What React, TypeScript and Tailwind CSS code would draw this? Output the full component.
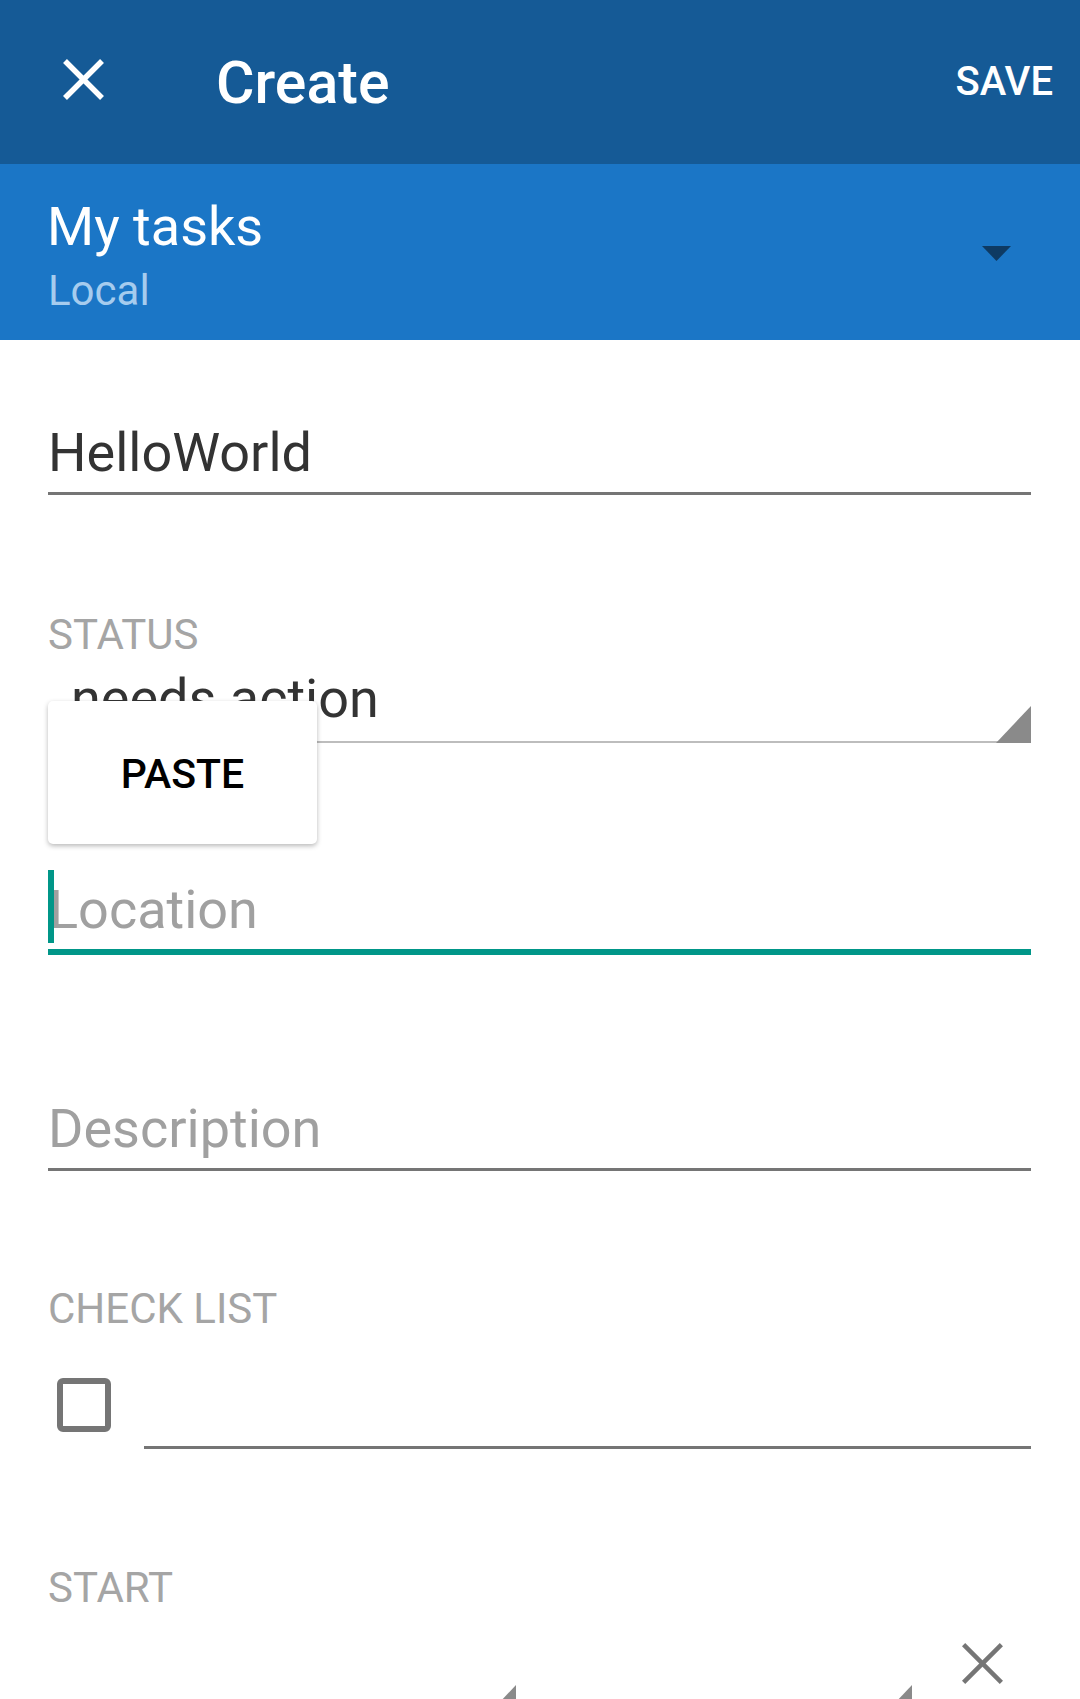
import React from 'react';

// Close glyph drawn as two crossed strokes
function CloseIcon({ size, color, stroke }: { size: number; color: string; stroke: number }) {
  const a = stroke * 0.36;
  const b = size - a;
  return (
    <svg width={size} height={size} viewBox={`0 0 ${size} ${size}`} className="block shrink-0">
      <line x1={a} y1={a} x2={b} y2={b} stroke={color} strokeWidth={stroke} />
      <line x1={b} y1={a} x2={a} y2={b} stroke={color} strokeWidth={stroke} />
    </svg>
  );
}

// Spinner corner triangle (right angle bottom-right)
function CornerTriangle({ className }: { className: string }) {
  return (
    <svg width="35" height="37" viewBox="0 0 35 37" className={className}>
      <polygon points="35,0 35,37 0,37" fill="#8a8a8a" />
    </svg>
  );
}

export default function App() {
  return (
    <div className="relative h-[1699px] w-[1080px] overflow-hidden bg-white font-['Roboto',sans-serif]">
      {/* Toolbar */}
      <header className="flex h-[164px] items-center bg-[#155a96] pr-[27px] text-white">
        <div className="mb-[6px] ml-[63px]">
          <CloseIcon size={41} color="#ffffff" stroke={5.5} />
        </div>
        <h1 className="ml-[112px] text-[59px] font-medium leading-none">Create</h1>
        <button className="ml-auto text-[40px] font-medium leading-none">SAVE</button>
      </header>

      {/* List selector */}
      <div className="flex h-[176px] justify-between bg-[#1b76c6] pl-[47px] pr-[69px]">
        <div className="flex flex-col pt-[36px]">
          <span className="text-[54px] leading-none text-white">My tasks</span>
          <span className="mt-[16px] pl-[1px] text-[42px] leading-none text-[#a6ccee]">Local</span>
        </div>
        <svg width="29" height="15" viewBox="0 0 29 15" className="mt-[82px]">
          <polygon points="0,0 29,0 14.5,15" fill="#0e3a63" />
        </svg>
      </div>

      {/* Form */}
      <div className="flex flex-col pl-[48px] pr-[49px]">
        {/* Title */}
        <div className="mt-[86px] text-[54px] leading-none text-[#333333]">HelloWorld</div>
        <div className="mt-[12px] h-[3px] bg-[#757575]" />

        {/* Status */}
        <div className="mt-[119px] text-[42px] leading-none text-[#a5a5a5]">STATUS</div>
        <div className="mt-[16px] pl-[23px] text-[54px] leading-none text-[#333333]">needs action</div>
        <div className="relative mt-[15px] h-[2px] bg-[#bdbdbd]">
          <CornerTriangle className="absolute bottom-0 right-0" />
        </div>

        {/* Location (focused) */}
        <div className="relative mt-[140px]">
          <div className="absolute left-0 top-[-13px] h-[73px] w-[6px] bg-[#009688]" />
          <div className="pl-[1px] text-[54px] leading-none text-[#a0a0a0]">Location</div>
        </div>
        <div className="mt-[12px] h-[6px] bg-[#009688]" />

        {/* Description */}
        <div className="mt-[147px] text-[54px] leading-none text-[#a0a0a0]">Description</div>
        <div className="mt-[12px] h-[3px] bg-[#757575]" />

        {/* Check list */}
        <div className="mt-[117px] text-[42px] leading-none text-[#a5a5a5]">CHECK LIST</div>
        <div className="mt-[48px] flex items-start">
          <div className="ml-[9px] h-[54px] w-[54px] rounded-[6px] border-[6px] border-[#757575]" />
          <div className="ml-[33px] h-[71px] flex-1 border-b-[3px] border-[#757575]" />
        </div>

        {/* Start */}
        <div className="mt-[118px] text-[42px] leading-none text-[#a5a5a5]">START</div>
        <div className="mt-[31px] flex h-[100px] items-start">
          <div className="relative h-full w-[468px]">
            <CornerTriangle className="absolute right-0 top-[45px]" />
          </div>
          <div className="relative ml-[24px] h-full w-[372px]">
            <CornerTriangle className="absolute right-0 top-[45px]" />
          </div>
          <div className="ml-[50px] mt-[3px]">
            <CloseIcon size={41} color="#757575" stroke={4.5} />
          </div>
        </div>
      </div>

      {/* Paste popup */}
      <div className="absolute left-[48px] top-[701px] flex h-[143px] w-[269px] items-center justify-center rounded-[5px] bg-white pt-[4px] shadow-[0_2px_5px_rgba(0,0,0,0.28)]">
        <span className="text-[41px] font-medium leading-none text-black">PASTE</span>
      </div>
    </div>
  );
}
